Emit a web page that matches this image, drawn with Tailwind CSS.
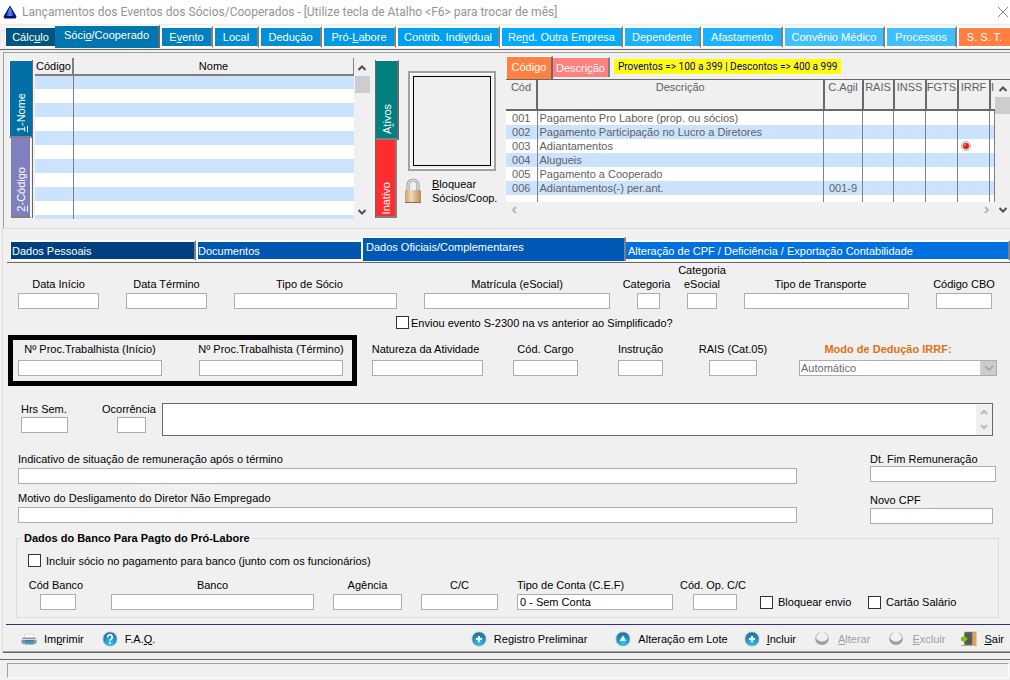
<!DOCTYPE html>
<html lang="pt-BR">
  <head>
    <meta charset="UTF-8" />
    <meta name="viewport" content="width=device-width, initial-scale=1.0" />
    <title>Lançamentos dos Eventos dos Sócios/Cooperados</title>
    <script src="https://cdn.jsdelivr.net/npm/@tailwindcss/browser@4"></script>
  </head>
  <body class="min-h-screen overflow-x-hidden bg-[#f0f0f0] font-['Liberation_Sans',Arial,sans-serif] text-[11px] leading-[14px] text-black">
    <!-- Title bar -->
    <header class="flex h-6 items-center bg-white pl-[3px]">
      <svg class="h-[14px] w-[14px]" viewBox="0 0 14 14">
        <defs>
          <linearGradient id="tri" x1="0" y1="0" x2="1" y2="0">
            <stop offset="0" stop-color="#0a1f9c" />
            <stop offset="0.5" stop-color="#5b8cf5" />
            <stop offset="1" stop-color="#0018a0" />
          </linearGradient>
        </defs>
        <path d="M7 0.5 L13.5 11.5 L12.5 13.5 H1.5 L0.5 11.5 Z" fill="#00107a" />
        <path d="M7 2 L11.5 11 H2.5 Z" fill="url(#tri)" />
      </svg>
      <h1 class="ml-[5px] flex-1 whitespace-nowrap font-[Roboto,'Open_Sans',sans-serif] text-[12px] text-[#949494]">Lançamentos dos Eventos dos Sócios/Cooperados - [Utilize tecla de Atalho &lt;F6&gt; para trocar de mês]</h1>
      <button aria-label="Fechar" class="mr-px h-4 w-3">
        <svg viewBox="0 0 12 16" class="h-4 w-3" fill="none" stroke="#888" stroke-width="1"><path d="M1 3 L11 13 M11 3 L1 13" /></svg>
      </button>
    </header>

    <!-- Main tabs -->
    <nav class="flex h-[26px] items-end whitespace-nowrap border-b border-[#696969] pb-px pl-[5px] text-white">
      <button class="h-[22px] grow basis-[50px] border-y-2 border-l border-white bg-[#005680]">Cálc<u>u</u>lo</button>
      <button class="h-[23px] grow basis-[105px] border-r-2 border-t border-r-[#696969] border-t-white bg-[#0075ae] pb-1">Sóci<u>o</u>/Cooperado</button>
      <button class="h-[22px] grow basis-[53px] border-2 border-white border-r-[#808080] bg-[#0080c0]">E<u>v</u>ento</button>
      <button class="h-[22px] grow basis-[46px] border-2 border-white border-r-[#808080] bg-[#008ad0]">Local</button>
      <button class="h-[22px] grow basis-[63px] border-2 border-white border-r-[#808080] bg-[#0090d9]">Dedução</button>
      <button class="h-[22px] grow basis-[74px] border-2 border-white border-r-[#808080] bg-[#0098e4]">Pró-<u>L</u>abore</button>
      <button class="h-[22px] grow basis-[104px] border-2 border-white border-r-[#808080] bg-[#00a0f0]">Contrib. Indi<u>v</u>idual</button>
      <button class="h-[22px] grow basis-[123px] border-2 border-white border-r-[#808080] bg-[#00aaff]">Re<u>n</u>d. Outra Empresa</button>
      <button class="h-[22px] grow basis-[78px] border-2 border-white border-r-[#808080] bg-[#1ab2ff]">Dependente</button>
      <button class="h-[22px] grow basis-[82px] border-2 border-white border-r-[#808080] bg-[#1ab2ff]">Afastamento</button>
      <button class="h-[22px] grow basis-[102px] border-2 border-white border-r-[#808080] bg-[#40bfff]">Convênio Médico</button>
      <button class="h-[22px] grow basis-[72px] border-2 border-white border-r-[#808080] bg-[#40bfff]">Processos</button>
      <button class="h-[22px] grow basis-[53px] border-y-2 border-l-2 border-white bg-[#ff8040]">S. S. T.</button>
    </nav>

    <!-- Lists -->
    <section class="ml-[3px] mt-0.5 flex items-start border-l border-t border-[#a0a0a0] pb-[9px] pl-[5px] pt-[5px]">
      <div class="mt-0.5 flex w-6 flex-col border-r border-[#696969] text-white">
        <button class="flex h-[78px] w-[23px] items-end justify-center border-b-2 border-l border-t border-b-[#808080] border-l-white border-t-white bg-[#006fa6] pb-1">
          <span class="rotate-180 [writing-mode:vertical-rl]"><u>1</u>-Nome</span>
        </button>
        <button class="ml-0.5 flex h-20 w-5 items-end justify-center border-b-2 border-r border-b-[#808080] border-r-white bg-[#8080c0] pb-1">
          <span class="rotate-180 [writing-mode:vertical-rl]"><u>2</u>-Código</span>
        </button>
      </div>

      <div class="ml-0.5 flex h-[161px] w-[335px]">
        <div class="flex-1 overflow-hidden bg-white">
          <table class="w-full table-fixed border-collapse">
            <thead>
              <tr class="h-[17px] border-b-2 border-[#808080] bg-[#f0f0f0]">
                <th class="w-[38px] border-r-2 border-[#808080] p-0 font-normal">Código</th>
                <th class="border-r border-[#808080] p-0 font-normal">Nome</th>
              </tr>
            </thead>
            <tbody>
              <tr class="h-[14px] bg-[#cce3ff]"><td class="border-r border-[#808080]"></td><td></td></tr>
              <tr class="h-[14px] bg-white"><td class="border-r border-[#808080]"></td><td></td></tr>
              <tr class="h-[14px] bg-[#cce3ff]"><td class="border-r border-[#808080]"></td><td></td></tr>
              <tr class="h-[14px] bg-white"><td class="border-r border-[#808080]"></td><td></td></tr>
              <tr class="h-[14px] bg-[#cce3ff]"><td class="border-r border-[#808080]"></td><td></td></tr>
              <tr class="h-[14px] bg-white"><td class="border-r border-[#808080]"></td><td></td></tr>
              <tr class="h-[14px] bg-[#cce3ff]"><td class="border-r border-[#808080]"></td><td></td></tr>
              <tr class="h-[14px] bg-white"><td class="border-r border-[#808080]"></td><td></td></tr>
              <tr class="h-[14px] bg-[#cce3ff]"><td class="border-r border-[#808080]"></td><td></td></tr>
              <tr class="h-[14px] bg-white"><td class="border-r border-[#808080]"></td><td></td></tr>
              <tr class="h-[14px] bg-[#cce3ff]"><td class="border-r border-[#808080]"></td><td></td></tr>
            </tbody>
          </table>
        </div>
        <div class="flex w-4 flex-col items-center">
          <svg class="h-[18px] w-4" viewBox="0 0 16 18" fill="none" stroke="#505050" stroke-width="2"><path d="M4.500 12 L8 8.500 L11.500 12" /></svg>
          <div class="h-[17px] w-[15px] bg-[#cdcdcd]"></div>
          <svg class="mt-auto h-4 w-4" viewBox="0 0 16 16" fill="none" stroke="#505050" stroke-width="2"><path d="M4.500 7 L8 10.500 L11.500 7" /></svg>
        </div>
      </div>

      <div class="ml-[5px] mt-0.5 flex w-6 flex-col border-l border-[#696969] text-white">
        <button class="flex h-20 w-[23px] items-end justify-center border-b-2 border-r-2 border-t border-b-[#808080] border-r-[#696969] border-t-white bg-[#008080] pb-1">
          <span class="rotate-180 [writing-mode:vertical-rl]">A<u>t</u>ivos</span>
        </button>
        <button class="flex h-[78px] w-[21px] items-end justify-center border-b-2 border-r-2 border-[#808080] bg-[#ff2d2d] pb-0.5">
          <span class="rotate-180 [writing-mode:vertical-rl]">Inativo</span>
        </button>
      </div>

      <div class="ml-[5px] mt-[13px] w-[94px]">
        <div class="ml-1 h-[100px] w-[88px] border-2 border-[#a0a0a0] bg-white p-px">
          <div class="h-full border-2 border-[#f0f0f0] bg-[#f0f0f0]">
            <div class="h-full border border-black"></div>
          </div>
        </div>
        <button class="mt-1.5 flex items-start whitespace-nowrap text-left">
          <svg class="mt-px h-[26px] w-[18px]" viewBox="0 0 18 26">
            <defs>
              <linearGradient id="lock" x1="0" y1="0" x2="1" y2="0">
                <stop offset="0" stop-color="#c8a070" />
                <stop offset="0.4" stop-color="#f2d9b0" />
                <stop offset="1" stop-color="#b88a58" />
              </linearGradient>
            </defs>
            <path d="M4 13 V7.500 A5 5.500 0 0 1 14 7.500 V13" fill="none" stroke="#999" stroke-width="3.200" />
            <path d="M4 13 V7.500 A5 5.500 0 0 1 14 7.500 V13" fill="none" stroke="#e2e2e2" stroke-width="1.400" />
            <rect x="1" y="12" width="16" height="13" rx="1" fill="url(#lock)" />
            <path d="M1 24.500 H17" stroke="#8a6a45" />
          </svg>
          <span class="ml-2.5"><u>B</u>loquear<br />Sócios/Coop.</span>
        </button>
      </div>

      <div class="ml-2 min-w-0 flex-1 self-stretch">
        <div class="-mt-0.5 flex h-[22px] items-start whitespace-nowrap pl-px text-white">
          <button class="h-[23px] w-[46px] border-r-2 border-t border-r-[#696969] border-t-white bg-[#ff8040] pb-0.5">Códi<u>g</u>o</button>
          <button class="mt-px h-5 w-[57px] border-r-2 border-t border-r-[#808080] border-t-white bg-[#ff8080]">Descri<u>ç</u>ão</button>
          <p class="ml-1 mt-[3px] h-[15px] bg-[#ffff00] px-1 font-[Roboto,sans-serif] text-[10px] leading-[15px] text-[#0000a0]">Proventos =&gt; 100 a 399 | Descontos =&gt; 400 a 999</p>
        </div>
        <div class="mt-px flex h-[139px] border-t border-[#696969]">
          <div class="min-w-0 flex-1">
            <div class="h-[122px] overflow-hidden bg-white">
              <table class="w-full table-fixed border-collapse text-[#606060]">
                <thead>
                  <tr class="h-[30px] border-b-2 border-[#696969] bg-[#f0f0f0] align-top">
                    <th class="w-[31px] border-r-2 border-[#696969] p-0 font-normal">Cód</th>
                    <th class="border-r-2 border-[#696969] p-0 font-normal">Descrição</th>
                    <th class="w-[39px] border-r-2 border-[#696969] p-0 font-normal">C.Agil</th>
                    <th class="w-[31px] border-r-2 border-[#696969] p-0 font-normal">RAIS</th>
                    <th class="w-[32px] border-r-2 border-[#696969] p-0 font-normal">INSS</th>
                    <th class="w-[32px] border-r-2 border-[#696969] p-0 font-normal">FGTS</th>
                    <th class="w-[32px] border-r-2 border-[#696969] p-0 font-normal">IRRF</th>
                    <th class="w-[5px] overflow-hidden p-0 font-normal">I</th>
                  </tr>
                </thead>
                <tbody class="[&_td]:border-r [&_td]:border-[#808080] [&_td]:px-0.5 [&_td]:py-0">
                  <tr class="h-[14px] bg-white">
                    <td class="text-center">001</td><td>Pagamento Pro Labore (prop. ou sócios)</td><td></td><td></td><td></td><td></td><td></td><td></td>
                  </tr>
                  <tr class="h-[14px] bg-[#cce3ff]">
                    <td class="text-center">002</td><td>Pagamento Participação no Lucro a Diretores</td><td></td><td></td><td></td><td></td><td></td><td></td>
                  </tr>
                  <tr class="h-[14px] bg-white">
                    <td class="text-center">003</td><td>Adiantamentos</td><td></td><td></td><td></td><td></td>
                    <td>
                      <svg class="ml-px h-[10px] w-[10px]" viewBox="0 0 10 10">
                        <circle cx="5" cy="5" r="4.500" fill="#dcdcdc" stroke="#b8b8b8" />
                        <circle cx="5" cy="5" r="3" fill="#e02000" />
                        <circle cx="4" cy="4" r="1.200" fill="#ff6a50" />
                      </svg>
                    </td>
                    <td></td>
                  </tr>
                  <tr class="h-[14px] bg-[#cce3ff]">
                    <td class="text-center">004</td><td>Alugueis</td><td></td><td></td><td></td><td></td><td></td><td></td>
                  </tr>
                  <tr class="h-[14px] bg-white">
                    <td class="text-center">005</td><td>Pagamento a Cooperado</td><td></td><td></td><td></td><td></td><td></td><td></td>
                  </tr>
                  <tr class="h-[14px] bg-[#cce3ff]">
                    <td class="text-center">006</td><td>Adiantamentos(-) per.ant.</td><td class="text-center">001-9</td><td></td><td></td><td></td><td></td><td></td>
                  </tr>
                  <tr class="h-[14px] bg-white">
                    <td></td><td></td><td></td><td></td><td></td><td></td><td></td><td></td>
                  </tr>
                </tbody>
              </table>
            </div>
            <div class="flex h-4 items-center justify-between px-1">
              <svg class="h-2 w-2" viewBox="0 0 8 8" fill="none" stroke="#b8b8b8" stroke-width="2"><path d="M6 1 L3 4 L6 7" /></svg>
              <svg class="h-2 w-2" viewBox="0 0 8 8" fill="none" stroke="#b8b8b8" stroke-width="2"><path d="M2 1 L5 4 L2 7" /></svg>
            </div>
          </div>
          <div class="flex w-[15px] flex-col items-center">
            <svg class="h-[17px] w-4" viewBox="0 0 16 17" fill="none" stroke="#505050" stroke-width="2"><path d="M4.500 11 L8 7.500 L11.500 11" /></svg>
            <div class="h-[17px] w-full bg-[#cdcdcd]"></div>
            <svg class="mt-auto h-4 w-4" viewBox="0 0 16 16" fill="none" stroke="#505050" stroke-width="2"><path d="M4.500 6 L8 9.500 L11.500 6" /></svg>
          </div>
        </div>
      </div>
    </section>

    <!-- Record -->
    <main class="ml-0.5 border-l border-t border-[#dcdcdc]">
      <nav class="ml-1 mt-2.5 flex h-6 items-end whitespace-nowrap border-b border-[#696969] pb-px pl-[3px] text-white [&>button]:text-left">
        <button class="h-[21px] grow basis-[186px] border-2 border-l border-white border-r-[#808080] bg-[#004080] pl-px">Dados Pessoais</button>
        <button class="h-[21px] grow basis-[167px] border-2 border-white bg-[#0055b0]">Documentos</button>
        <button class="h-[24px] grow basis-[263px] border-r-2 border-t border-r-[#808080] border-t-white bg-[#0058b5] pb-1.5 pl-[3px]">Dados Oficiais/Complementares</button>
        <button class="h-[21px] grow basis-[384px] border-2 border-l-0 border-white border-r-[#808080] bg-[#0070e0] pl-0.5">Alteração de CPF / Deficiência / Exportação Contabilidade</button>
      </nav>

      <form class="[&_input[type=text]]:h-4 [&_input[type=text]]:w-full [&_input[type=text]]:border [&_input[type=text]]:border-[#abadb3] [&_input[type=text]]:bg-white [&_input[type=text]]:px-0.5 [&_label]:whitespace-nowrap">
        <div class="flex items-end gap-[27px] pl-[15px] pr-[18px] text-center">
          <div class="flex min-w-0 grow basis-[81px] flex-col items-center gap-0.5"><label for="inicio">Data Início</label><input id="inicio" type="text" /></div>
          <div class="flex min-w-0 grow basis-[81px] flex-col items-center gap-0.5"><label for="termino">Data Término</label><input id="termino" type="text" /></div>
          <div class="flex min-w-0 grow basis-[163px] flex-col items-center gap-0.5"><label for="tipo-socio" class="pr-3">Tipo de Sócio</label><input id="tipo-socio" type="text" /></div>
          <div class="flex min-w-0 grow basis-[186px] flex-col items-center gap-0.5"><label for="matricula">Matrícula (eSocial)</label><input id="matricula" type="text" /></div>
          <div class="flex min-w-0 grow basis-[23px] flex-col items-center gap-0.5"><label for="categoria" class="pr-1">Categoria</label><input id="categoria" type="text" /></div>
          <div class="flex min-w-0 grow basis-[30px] flex-col items-center gap-0.5"><label for="cat-esocial">Categoria<br />eSocial</label><input id="cat-esocial" type="text" /></div>
          <div class="flex min-w-0 grow basis-[165px] flex-col items-center gap-0.5"><label for="transporte" class="pr-3">Tipo de Transporte</label><input id="transporte" type="text" /></div>
          <div class="flex min-w-0 grow basis-[56px] flex-col items-center gap-0.5"><label for="cbo">Código CBO</label><input id="cbo" type="text" /></div>
        </div>

        <div class="mt-[7px] flex h-[13px] items-center pl-[393px]">
          <input id="s2300" type="checkbox" class="h-[13px] w-[13px] appearance-none border border-[#333] bg-white" />
          <label for="s2300" class="ml-0.5">Enviou evento S-2300 na vs anterior ao Simplificado?</label>
        </div>

        <div class="mt-1.5 flex items-start pl-[5px] pr-[13px] text-center">
          <div class="flex grow basis-[349px] gap-[37px] border-[5px] border-black px-[5px] pb-[5px] pr-[9px] pt-0.5">
            <div class="flex min-w-0 flex-1 flex-col items-center gap-1"><label for="proc-inicio">Nº Proc.Trabalhista (Início)</label><input id="proc-inicio" type="text" /></div>
            <div class="flex min-w-0 flex-1 flex-col items-center gap-1"><label for="proc-termino">Nº Proc.Trabalhista (Término)</label><input id="proc-termino" type="text" /></div>
          </div>
          <div class="ml-[15px] mt-[7px] flex min-w-0 grow basis-[111px] flex-col items-center gap-1"><label for="natureza" class="pr-1">Natureza da Atividade</label><input id="natureza" type="text" /></div>
          <div class="ml-[30px] mt-[7px] flex min-w-0 grow basis-[65px] flex-col items-center gap-1"><label for="cargo">Cód. Cargo</label><input id="cargo" type="text" /></div>
          <div class="ml-10 mt-[7px] flex min-w-0 grow basis-[45px] flex-col items-center gap-1"><label for="instrucao">Instrução</label><input id="instrucao" type="text" /></div>
          <div class="ml-[46px] mt-[7px] flex min-w-0 grow basis-[48px] flex-col items-center gap-1"><label for="rais">RAIS (Cat.05)</label><input id="rais" type="text" /></div>
          <div class="ml-[42px] mt-[7px] flex min-w-0 grow basis-[198px] flex-col items-center gap-1">
            <label for="deducao" class="pr-5 font-bold text-[#e07010]">Modo de Dedução IRRF:</label>
            <div class="flex h-4 w-full border border-[#abadb3] bg-white">
              <select id="deducao" disabled class="min-w-0 flex-1 appearance-none pl-px text-left leading-[14px] text-[#6d6d6d]">
                <option>Automático</option>
              </select>
              <span class="flex w-4 items-center justify-center border-l border-[#b5dcf5] bg-[#cccccc]">
                <svg class="h-2 w-[10px]" viewBox="0 0 10 8" fill="none" stroke="#a0a0a0" stroke-width="1.500"><path d="M1 2 L5 6 L9 2" /></svg>
              </span>
            </div>
          </div>
        </div>

        <div class="mt-4 flex items-start pl-[18px] pr-[17px]">
          <div class="flex w-[47px] flex-col gap-px"><label for="horas">Hrs Sem.</label><input id="horas" type="text" /></div>
          <div class="ml-[34px] flex w-[54px] flex-col gap-px">
            <label for="ocorrencia">Ocorrência</label>
            <div class="pl-[15px] pr-2.5"><input id="ocorrencia" type="text" /></div>
          </div>
          <div class="ml-1.5 mt-px flex h-[33px] flex-1 border border-[#696969] bg-white">
            <textarea aria-label="Descrição da ocorrência" class="h-full min-w-0 flex-1 resize-none"></textarea>
            <div class="flex w-4 flex-col items-center justify-between bg-[#f0f0f0] py-1">
              <svg class="h-2 w-2" viewBox="0 0 8 8" fill="none" stroke="#b8b8b8" stroke-width="2"><path d="M1 6 L4 3 L7 6" /></svg>
              <svg class="h-2 w-2" viewBox="0 0 8 8" fill="none" stroke="#b8b8b8" stroke-width="2"><path d="M1 2 L4 5 L7 2" /></svg>
            </div>
          </div>
        </div>

        <div class="mt-4 flex items-start gap-[73px] pl-[15px] pr-3.5">
          <div class="flex flex-1 flex-col">
            <label for="indicativo">Indicativo de situação de remuneração após o término</label>
            <input id="indicativo" type="text" class="mt-0.5" />
            <label for="motivo" class="mt-[7px]">Motivo do Desligamento do Diretor Não Empregado</label>
            <input id="motivo" type="text" class="mt-0.5" />
          </div>
          <div class="flex w-[126px] flex-col">
            <label for="fim">Dt. Fim Remuneração</label>
            <input id="fim" type="text" />
            <label for="cpf" class="mt-[11px]">Novo CPF</label>
            <div class="mt-px flex pr-[3px]"><input id="cpf" type="text" /></div>
          </div>
        </div>

        <fieldset class="ml-[13px] mr-[11px] mt-[7px] border border-[#dcdcdc] px-[11px] pb-[7px]">
          <legend class="-ml-1.5 px-0.5 text-[11px] font-bold">Dados do Banco Para Pagto do Pró-Labore</legend>
          <div class="mt-[9px] flex h-[13px] items-center">
            <input id="incluir-socio" type="checkbox" class="h-[13px] w-[13px] appearance-none border border-[#333] bg-white" />
            <label for="incluir-socio" class="ml-[5px]">Incluir sócio no pagamento para banco (junto com os funcionários)</label>
          </div>
          <div class="mt-[11px] flex items-end pl-3 text-center">
            <div class="flex w-9 flex-col items-center gap-0.5"><label for="cod-banco" class="pr-1">Cód Banco</label><input id="cod-banco" type="text" /></div>
            <div class="ml-[35px] flex min-w-0 grow basis-[203px] flex-col items-center gap-0.5"><label for="banco">Banco</label><input id="banco" type="text" /></div>
            <div class="ml-[19px] flex min-w-0 grow basis-[69px] flex-col items-center gap-0.5"><label for="agencia">Agência</label><input id="agencia" type="text" /></div>
            <div class="ml-[19px] flex min-w-0 grow basis-[77px] flex-col items-center gap-0.5"><label for="conta">C/C</label><input id="conta" type="text" /></div>
            <div class="ml-[19px] flex min-w-0 grow basis-[156px] flex-col items-start gap-0.5"><label for="tipo-conta">Tipo de Conta (C.E.F)</label><input id="tipo-conta" type="text" value="0 - Sem Conta" /></div>
            <div class="ml-5 flex w-11 flex-col items-center gap-0.5"><label for="op" class="pr-1">Cód. Op. C/C</label><input id="op" type="text" /></div>
            <div class="ml-[23px] flex h-4 w-[108px] items-center">
              <input id="bloq-envio" type="checkbox" class="h-[13px] w-[13px] appearance-none border border-[#333] bg-white" />
              <label for="bloq-envio" class="ml-[5px]">Bloquear envio</label>
            </div>
            <div class="flex h-4 w-[119px] items-center">
              <input id="cartao" type="checkbox" class="h-[13px] w-[13px] appearance-none border border-[#333] bg-white" />
              <label for="cartao" class="ml-[5px]">Cartão Salário</label>
            </div>
          </div>
        </fieldset>
      </form>

      <!-- Toolbar -->
      <div class="ml-[3px] mt-1.5 flex h-[27px] items-center whitespace-nowrap border-t border-[#303070] pl-[15px] pr-1.5 pt-px [&>button]:flex [&>button]:items-center">
        <button>
          <svg class="h-4 w-4" viewBox="0 0 16 16">
            <path d="M4 3 H12 L13 8 H3 Z" fill="#fdfdfd" stroke="#c4c4c4" stroke-width="0.600" />
            <path d="M2 6.500 H14 L15.500 9 V12 L14 13 H2 L0.500 12 V9 Z" fill="#8b9299" />
            <path d="M1 8.500 H15" stroke="#d8dde2" />
            <path d="M4 9.500 H12 V10.500 H4 Z" fill="#40464c" />
            <path d="M5 10.500 H11.500 L13 13.500 H4 Z" fill="#3a9be0" />
          </svg>
          <span class="ml-[7px]">Im<u>p</u>rimir</span>
        </button>
        <button class="ml-[18px]">
          <svg class="h-4 w-4" viewBox="0 0 16 16">
            <defs>
              <radialGradient id="orb" cx="0.5" cy="0.75" r="0.7">
                <stop offset="0" stop-color="#30c8f0" />
                <stop offset="1" stop-color="#176d9c" />
              </radialGradient>
            </defs>
            <circle cx="8" cy="8" r="7" fill="url(#orb)" stroke="#9cb9c8" stroke-width="0.800" />
            <path d="M5.700 6.300 A2.300 2.300 0 1 1 9.300 7.900 Q8 8.600 8 9.800" fill="none" stroke="#fff" stroke-width="1.700" />
            <circle cx="8" cy="12" r="1.100" fill="#fff" />
          </svg>
          <span class="ml-[7px]">F.A.<u>Q</u>.</span>
        </button>
        <button class="ml-auto">
          <svg class="h-4 w-4" viewBox="0 0 16 16"><circle cx="8" cy="8" r="7" fill="url(#orb)" stroke="#9cb9c8" stroke-width="0.800" /><path d="M8 5 V11 M5 8 H11" stroke="#fff" stroke-width="2" /></svg>
          <span class="ml-[7px]">Registro Preliminar</span>
        </button>
        <button class="ml-7">
          <svg class="h-4 w-4" viewBox="0 0 16 16"><circle cx="8" cy="8" r="7" fill="url(#orb)" stroke="#9cb9c8" stroke-width="0.800" /><path d="M8 4.500 L11.200 10 H4.800 Z" fill="#fff" /></svg>
          <span class="ml-[7px]">Alteração em Lote</span>
        </button>
        <button class="ml-4">
          <svg class="h-4 w-4" viewBox="0 0 16 16"><circle cx="8" cy="8" r="7" fill="url(#orb)" stroke="#9cb9c8" stroke-width="0.800" /><path d="M8 5 V11 M5 8 H11" stroke="#fff" stroke-width="2" /></svg>
          <span class="ml-[7px]"><u>I</u>ncluir</span>
        </button>
        <button disabled class="ml-[18px] text-[#a0a0a0]">
          <svg class="h-4 w-4" viewBox="0 0 16 16"><path d="M5.500 1.500 Q1.500 3 1.500 8 M14.500 8 Q14.500 3 10.500 1.500" fill="none" stroke="#b0b0b0" stroke-width="0.900" /><path d="M1 7 Q1.500 14 8 14 Q14.500 14 15 7 L12 9 Q11 10.500 8 10.500 Q5 10.500 4 9 Z" fill="#a0a0a0" /></svg>
          <span class="ml-2"><u>A</u>lterar</span>
        </button>
        <button disabled class="ml-[18px] text-[#a0a0a0]">
          <svg class="h-4 w-4" viewBox="0 0 16 16"><path d="M5.500 1.500 Q1.500 3 1.500 8 M14.500 8 Q14.500 3 10.500 1.500" fill="none" stroke="#b0b0b0" stroke-width="0.900" /><path d="M1 7 Q1.500 14 8 14 Q14.500 14 15 7 L12 9 Q11 10.500 8 10.500 Q5 10.500 4 9 Z" fill="#a0a0a0" /></svg>
          <span class="ml-2"><u>E</u>xcluir</span>
        </button>
        <button class="ml-4">
          <svg class="h-4 w-4" viewBox="0 0 16 16">
            <path d="M3.500 1 H14 V14 H3.500 Z" fill="#505860" stroke="#9a9a9a" stroke-width="0.600" />
            <path d="M11 1.500 L15.500 0.500 V15.500 L11 14 Z" fill="#d9a55e" />
            <path d="M11 1.500 V14" stroke="#8d6632" stroke-width="0.700" />
            <path d="M0.500 6.500 H3 V4 L7 8 L3 12 V9.500 H0.500 Z" fill="#86c800" stroke="#4e8000" stroke-width="0.500" />
            <path d="M0 14.500 H11" stroke="#c4a070" />
          </svg>
          <span class="ml-[7px]"><u>S</u>air</span>
        </button>
      </div>
      <div class="h-0.5 border-b border-t border-b-[#696969] border-t-[#a0a0a0]"></div>
    </main>

    <!-- Status bar -->
    <footer class="mt-1.5 border-t border-[#696969] pl-[7px] pr-px pt-[3px]">
      <div class="h-[15px] border border-white border-l-[#a0a0a0] border-t-[#a0a0a0]"></div>
    </footer>
  </body>
</html>
